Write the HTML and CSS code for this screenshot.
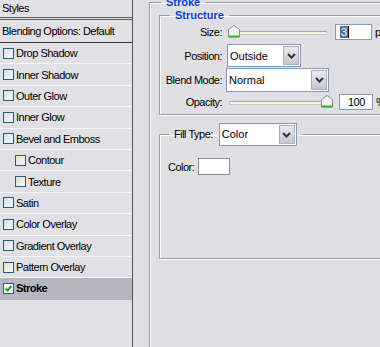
FILE: index.html
```html
<!DOCTYPE html>
<html lang="en">
<head>
  <meta charset="UTF-8">
  <title>Layer Style - Stroke</title>
  <link rel="stylesheet" href="styles.css">
</head>
<body>
  <div class="dialog">
    <!-- styles list -->
    <div class="styles-panel">
      <div class="panel-head">Styles</div>
      <div class="panel-blend">Blending Options: Default</div>
      <ul class="style-list">
        <li><span class="cb"></span>Drop Shadow</li>
        <li><span class="cb"></span>Inner Shadow</li>
        <li><span class="cb"></span>Outer Glow</li>
        <li><span class="cb"></span>Inner Glow</li>
        <li><span class="cb"></span>Bevel and Emboss</li>
        <li class="sub"><span class="cb"></span>Contour</li>
        <li class="sub"><span class="cb"></span>Texture</li>
        <li><span class="cb"></span>Satin</li>
        <li><span class="cb"></span>Color Overlay</li>
        <li><span class="cb"></span>Gradient Overlay</li>
        <li><span class="cb"></span>Pattern Overlay</li>
        <li class="active">
          <span class="cb">
            <svg width="9" height="9" viewBox="0 0 9 9"><path d="M1.5 4.5 L3.5 6.5 L7.5 2" fill="none" stroke="#21a121" stroke-width="2"/></svg>
          </span>Stroke
        </li>
      </ul>
    </div>

    <!-- settings -->
    <div class="settings">
      <fieldset class="group outer">
        <legend>Stroke</legend>

        <fieldset class="group structure">
          <legend>Structure</legend>

          <div class="row row-size">
            <label>Size:</label>
            <div class="slider">
              <div class="track"></div>
              <svg class="thumb thumb-left" width="12" height="13" viewBox="0 0 12 13">
                <polygon points="0.5,12 0.5,4.5 6,0.5 11.5,4.5 11.5,12" fill="#f3f3ee" stroke="#8d8d8d"/>
                <line x1="1" y1="11.5" x2="11" y2="11.5" stroke="#2cb82c" stroke-width="2"/>
              </svg>
            </div>
            <div class="num num-size"><span class="sel">3</span></div>
            <span class="unit">px</span>
          </div>

          <div class="row row-pos">
            <label>Position:</label>
            <div class="select sel-pos">
              <span class="value">Outside</span>
              <span class="arrow"><svg width="9" height="6" viewBox="0 0 9 6"><path d="M1 1 L4.5 4.5 L8 1" fill="none" stroke="#333" stroke-width="2"/></svg></span>
            </div>
          </div>

          <div class="row row-blend">
            <label>Blend Mode:</label>
            <div class="select sel-blend">
              <span class="value">Normal</span>
              <span class="arrow"><svg width="9" height="6" viewBox="0 0 9 6"><path d="M1 1 L4.5 4.5 L8 1" fill="none" stroke="#333" stroke-width="2"/></svg></span>
            </div>
          </div>

          <div class="row row-opacity">
            <label>Opacity:</label>
            <div class="slider slider-op">
              <div class="track"></div>
              <svg class="thumb thumb-right" width="12" height="13" viewBox="0 0 12 13">
                <polygon points="0.5,12 0.5,4.5 6,0.5 11.5,4.5 11.5,12" fill="#f3f3ee" stroke="#8d8d8d"/>
                <line x1="1" y1="11.5" x2="11" y2="11.5" stroke="#2cb82c" stroke-width="2"/>
              </svg>
            </div>
            <div class="num num-op">100</div>
            <span class="unit">%</span>
          </div>
        </fieldset>

        <fieldset class="group fill">
          <legend>
            <label>Fill Type:</label>
            <div class="select sel-fill">
              <span class="value">Color</span>
              <span class="arrow"><svg width="9" height="6" viewBox="0 0 9 6"><path d="M1 1 L4.5 4.5 L8 1" fill="none" stroke="#333" stroke-width="2"/></svg></span>
            </div>
          </legend>
          <div class="color-row">
            <label>Color:</label>
            <span class="swatch"></span>
          </div>
        </fieldset>
      </fieldset>
    </div>
  </div>
</body>
</html>
```

FILE: styles.css
```css
html,
body {
  margin: 0;
  padding: 0;
  height: 100%;
  overflow: hidden;
}

body {
  background-color: #e0dfe3;
  font-family: 'Liberation Sans', Arial, sans-serif;
  font-size: 11px;
  letter-spacing: -0.5px;
  color: #000;
}

.dialog {
  display: flex;
  height: 347px;
}

/* Left list of styles */
.styles-panel {
  width: 132px;
  flex-shrink: 0;
  border-right: 1px solid #555;
  background-color: #e1e0e5;
}

.panel-head {
  height: 17px;
  line-height: 16px;
  padding-left: 2px;
  border-bottom: 3px double #5f5f5f;
}

.panel-blend {
  height: 22px;
  line-height: 22px;
  padding-left: 2px;
  border-bottom: 1px solid #3a3a3a;
}

.style-list {
  list-style: none;
  margin: 0;
  padding: 0;
}

.style-list li {
  box-sizing: border-box;
  height: 21.4px;
  display: flex;
  align-items: center;
  padding-left: 3px;
  border-bottom: 1px solid #f6f6f8;
}

.style-list li.sub {
  padding-left: 15px;
}

.style-list li.active {
  background-color: #b6b6c1;
  font-weight: bold;
  border-bottom-color: #b6b6c1;
}

.cb {
  box-sizing: border-box;
  width: 11px;
  height: 11px;
  margin-right: 2px;
  border: 1px solid #2a5a84;
  background: linear-gradient(135deg, #dcdcd6, #fafaf8);
  display: flex;
  align-items: center;
  justify-content: center;
}

.active .cb {
  background: #fff;
}

/* Right side */
.settings {
  flex: 1;
  padding-left: 16px;
}

.group {
  margin: 0;
  border: 1px solid #9e9ea4;
  box-shadow: 1px 1px 0 #fff, inset 1px 1px 0 #fff;
}

.group legend {
  padding: 0 5px;
  color: #0a3fd8;
  font-weight: bold;
  line-height: 13px;
  letter-spacing: 0;
}

.outer {
  margin-top: -4px;
  width: 300px;
  height: 400px;
  padding: 0 0 0 9px;
}

.outer > legend {
  margin-left: 2px;
}

.structure {
  padding: 1px 0 4px 0;
  width: 280px;
}

.structure > legend {
  margin-left: 10px;
}

.row {
  display: flex;
  align-items: center;
}

.row label {
  width: 62px;
  text-align: right;
  flex-shrink: 0;
}

.row-size {
  height: 18px;
}

.row-pos {
  height: 23px;
  margin-top: 3px;
}

.row-blend {
  height: 24px;
  margin-top: 1px;
}

.row-opacity {
  height: 16px;
  margin-top: 2px;
}

/* sliders */
.slider {
  position: relative;
  width: 98px;
  height: 14px;
  margin-left: 7px;
}

.slider .track {
  position: absolute;
  left: 0;
  right: 0;
  top: 6px;
  height: 2px;
  border: 1px solid #c8c8c0;
  border-top-color: #a8a8a0;
  background-color: #f4f3e9;
  border-radius: 1px;
}

.thumb {
  position: absolute;
  top: 0;
}

.thumb-left {
  left: -1px;
}

.thumb-right {
  right: -6px;
}

.num {
  box-sizing: border-box;
  height: 16px;
  border: 1px solid #7f9db9;
  background-color: #fff;
  font-size: 11px;
  line-height: 14px;
  padding-left: 4px;
}

.num-size {
  width: 37px;
  margin-left: 8px;
}

.num-size .sel {
  background-color: #5a6f9a;
  color: #fff;
  padding: 0 1px;
  border-right: 1px solid #000;
}

.num-op {
  width: 34px;
  margin-left: 12px;
  padding-left: 8px;
}

.unit {
  margin-left: 3px;
}

/* combo boxes */
.select {
  box-sizing: border-box;
  display: flex;
  border: 1px solid #7f9db9;
  background-color: #fff;
  letter-spacing: 0;
  font-weight: normal;
  color: #000;
}

.select .value {
  flex: 1;
  display: flex;
  align-items: center;
  padding-left: 2px;
  font-size: 11px;
}

.select .arrow {
  width: 16px;
  margin: 1px;
  display: flex;
  align-items: center;
  justify-content: center;
  background: linear-gradient(#e9e9ef, #c6c6d0);
  border: 1px solid #b0b0bc;
  box-sizing: border-box;
}

.sel-pos {
  width: 74px;
  height: 23px;
  margin-left: 5px;
}

.sel-blend {
  width: 103px;
  height: 24px;
  margin-left: 4px;
}

/* fill type group */
.fill {
  margin-top: 8px;
  width: 280px;
  height: 136px;
  padding: 12px 0 0 8px;
  box-sizing: border-box;
}

.fill > legend {
  display: flex;
  align-items: center;
  margin-left: 1px;
  padding: 0 5px;
  color: #000;
  font-weight: normal;
  letter-spacing: -0.5px;
}

.sel-fill {
  width: 78px;
  height: 23px;
  margin-left: 6px;
}

.color-row {
  display: flex;
  align-items: center;
}

.swatch {
  width: 30px;
  height: 15px;
  margin-left: 4px;
  border: 1px solid #8c8c94;
  background-color: #fff;
}
```
